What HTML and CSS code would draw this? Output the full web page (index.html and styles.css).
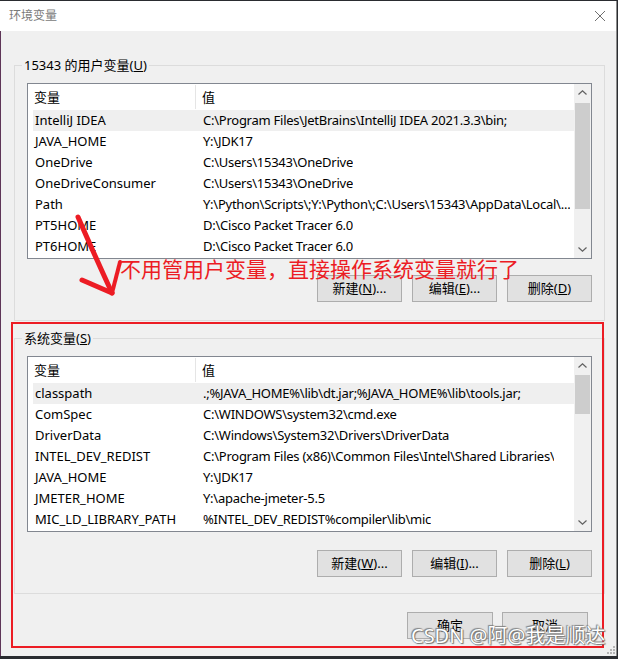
FILE: index.html
```html
<!DOCTYPE html>
<html lang="zh-CN">
<head>
<meta charset="utf-8">
<title>环境变量</title>
<link rel="stylesheet" href="styles.css">
</head>
<body>
<div class="window">
  <div class="titlebar">
    <span class="title">环境变量</span>
    <svg class="close" width="12" height="12" viewBox="0 0 12 12"><path d="M1 1L11 11M11 1L1 11" stroke="#6f6f6f" stroke-width="1" fill="none"/></svg>
  </div>
  <div class="client">
    <div class="group group-user">
      <div class="group-title">15343 的用户变量(<u>U</u>)</div>
      <div class="list">
        <div class="list-main">
          <div class="list-head"><div class="hcell h1">变量</div><div class="hcell h2">值</div></div>
          <div class="row sel"><span class="c1">IntelliJ IDEA</span><span class="c2">C:\Program Files\JetBrains\IntelliJ IDEA 2021.3.3\bin;</span></div>
          <div class="row"><span class="c1">JAVA_HOME</span><span class="c2">Y:\JDK17</span></div>
          <div class="row"><span class="c1">OneDrive</span><span class="c2">C:\Users\15343\OneDrive</span></div>
          <div class="row"><span class="c1">OneDriveConsumer</span><span class="c2">C:\Users\15343\OneDrive</span></div>
          <div class="row"><span class="c1">Path</span><span class="c2">Y:\Python\Scripts\;Y:\Python\;C:\Users\15343\AppData\Local\...</span></div>
          <div class="row"><span class="c1">PT5HOME</span><span class="c2">D:\Cisco Packet Tracer 6.0</span></div>
          <div class="row"><span class="c1">PT6HOME</span><span class="c2">D:\Cisco Packet Tracer 6.0</span></div>
        </div>
        <div class="vscroll">
          <div class="sb-btn"><svg width="9" height="5" viewBox="0 0 9 5"><path d="M0.5 4.5L4.5 0.8L8.5 4.5" stroke="#606060" stroke-width="1.2" fill="none"/></svg></div>
          <div class="sb-track"><div class="sb-thumb thumb-user"></div></div>
          <div class="sb-btn"><svg width="9" height="5" viewBox="0 0 9 5"><path d="M0.5 0.5L4.5 4.2L8.5 0.5" stroke="#606060" stroke-width="1.2" fill="none"/></svg></div>
        </div>
      </div>
      <div class="btn-row btn-row-user">
        <button class="btn">新建(<u>N</u>)...</button>
        <button class="btn">编辑(<u>E</u>)...</button>
        <button class="btn">删除(<u>D</u>)</button>
      </div>
    </div>

    <div class="group group-sys">
      <div class="group-title">系统变量(<u>S</u>)</div>
      <div class="list">
        <div class="list-main">
          <div class="list-head"><div class="hcell h1">变量</div><div class="hcell h2">值</div></div>
          <div class="row sel"><span class="c1">classpath</span><span class="c2">.;%JAVA_HOME%\lib\dt.jar;%JAVA_HOME%\lib\tools.jar;</span></div>
          <div class="row"><span class="c1">ComSpec</span><span class="c2">C:\WINDOWS\system32\cmd.exe</span></div>
          <div class="row"><span class="c1">DriverData</span><span class="c2">C:\Windows\System32\Drivers\DriverData</span></div>
          <div class="row"><span class="c1">INTEL_DEV_REDIST</span><span class="c2">C:\Program Files (x86)\Common Files\Intel\Shared Libraries\</span></div>
          <div class="row"><span class="c1">JAVA_HOME</span><span class="c2">Y:\JDK17</span></div>
          <div class="row"><span class="c1">JMETER_HOME</span><span class="c2">Y:\apache-jmeter-5.5</span></div>
          <div class="row"><span class="c1">MIC_LD_LIBRARY_PATH</span><span class="c2">%INTEL_DEV_REDIST%compiler\lib\mic</span></div>
        </div>
        <div class="vscroll">
          <div class="sb-btn"><svg width="9" height="5" viewBox="0 0 9 5"><path d="M0.5 4.5L4.5 0.8L8.5 4.5" stroke="#606060" stroke-width="1.2" fill="none"/></svg></div>
          <div class="sb-track"><div class="sb-thumb thumb-sys"></div></div>
          <div class="sb-btn"><svg width="9" height="5" viewBox="0 0 9 5"><path d="M0.5 0.5L4.5 4.2L8.5 0.5" stroke="#606060" stroke-width="1.2" fill="none"/></svg></div>
        </div>
      </div>
      <div class="btn-row btn-row-sys">
        <button class="btn">新建(<u>W</u>)...</button>
        <button class="btn">编辑(<u>I</u>)...</button>
        <button class="btn">删除(<u>L</u>)</button>
      </div>
    </div>

    <div class="dlg-buttons">
      <button class="btn btn-dlg">确定</button>
      <button class="btn btn-dlg">取消</button>
    </div>
  </div>
</div>

<div class="annot-box"></div>
<svg class="annot-arrow" width="60" height="100" viewBox="0 0 60 100">
  <path d="M8 12 C 18 35, 30 62, 42 88" stroke="#ec1c24" stroke-width="5" fill="none" stroke-linecap="round"/>
  <path d="M12 75 L42 88" stroke="#ec1c24" stroke-width="5" fill="none" stroke-linecap="round"/>
  <path d="M50 57 L42 88" stroke="#ec1c24" stroke-width="4" fill="none" stroke-linecap="round"/>
</svg>
<div class="annot-text">不用管用户变量，直接操作系统变量就行了</div>
<div class="watermark">CSDN @阿@我是顺达</div>
<svg class="grip" width="10" height="10" viewBox="0 0 10 10">
  <rect x="7" y="1" width="2" height="2" fill="#b5b5b5"/>
  <rect x="4" y="4" width="2" height="2" fill="#b5b5b5"/>
  <rect x="7" y="4" width="2" height="2" fill="#b5b5b5"/>
  <rect x="1" y="7" width="2" height="2" fill="#b5b5b5"/>
  <rect x="4" y="7" width="2" height="2" fill="#b5b5b5"/>
  <rect x="7" y="7" width="2" height="2" fill="#b5b5b5"/>
</svg>
</body>
</html>
```

FILE: styles.css
```css
* { box-sizing: border-box; }

html, body {
  margin: 0;
  padding: 0;
}

body {
  position: relative;
  width: 618px;
  height: 659px;
  background: #2a2c30;
  font-family: "Noto Sans", "Noto Sans CJK SC", sans-serif;
  font-size: 13px;
  color: #000;
  overflow: hidden;
}

.window {
  margin-top: 1px;
  width: 617px;
  height: 655px;
  background: #f0f0f0;
  border-right: 1px solid #8c8c8c;
  display: flex;
  flex-direction: column;
}

.titlebar {
  height: 30px;
  background: #fff;
  display: flex;
  align-items: center;
  justify-content: space-between;
  padding: 0 10px 2px 9px;
}

.title {
  font-family: "Noto Sans CJK SC", sans-serif;
  font-size: 12px;
  line-height: 16px;
  color: #7a7a7a;
}

.close { display: block; margin-top: 1px; }

.client {
  flex: 1;
  padding: 34px 11px 0 13px;
  border-left: 1px solid #5e3557;
}

.group {
  border: 1px solid #dcdcdc;
}

.group-sys { margin-top: 17px; padding-bottom: 16px; }
.group-user { padding-bottom: 18px; }

.group-title {
  width: fit-content;
  margin: -9px 0 0 7px;
  padding: 0 2px;
  background: #f0f0f0;
  line-height: 16px;
  height: 16px;
}

u { text-decoration: underline; text-underline-offset: 1px; }

.list {
  margin: 10px 12px 0 12px;
  height: 176px;
  border: 1px solid #828790;
  background: #fff;
  display: flex;
}

.list-main {
  flex: 1;
  min-width: 0;
  overflow: hidden;
}

.list-head {
  height: 26px;
  display: flex;
  align-items: center;
}

.hcell {
  line-height: 24px;
  height: 24px;
}

.h1 {
  width: 168px;
  padding-left: 6px;
  border-right: 1px solid #e5e5e5;
}

.h2 { padding-left: 6px; }

.row {
  margin-left: 5px;
  height: 21px;
  line-height: 21px;
  display: flex;
  white-space: nowrap;
}

.row.sel { background: #efefef; }

.c1 {
  width: 168px;
  flex: none;
  padding-left: 2px;
  overflow: hidden;
}

.c2 {
  padding-left: 2px;
  overflow: hidden;
  letter-spacing: -0.25px;
}

.vscroll {
  width: 17px;
  flex: none;
  background: #f0f0f0;
  display: flex;
  flex-direction: column;
}

.sb-btn {
  height: 17px;
  flex: none;
  display: flex;
  align-items: center;
  justify-content: center;
}

.sb-btn svg { display: block; }

.sb-track {
  flex: 1;
  display: flex;
  flex-direction: column;
  align-items: center;
}

.sb-thumb {
  width: 15px;
  background: #cdcdcd;
}

.thumb-user { margin-top: 2px; height: 106px; }
.thumb-sys { margin-top: 1px; height: 39px; }

.btn-row {
  display: flex;
  justify-content: flex-end;
  gap: 10px;
  margin-right: 12px;
}

.btn-row-user { margin-top: 16px; }
.btn-row-sys { margin-top: 18px; }

.btn {
  width: 85px;
  height: 27px;
  padding: 0;
  background: #e1e1e1;
  border: 1px solid #adadad;
  font-family: "Noto Sans", "Noto Sans CJK SC", sans-serif;
  font-size: 13px;
  line-height: 25px;
  color: #000;
}

.dlg-buttons {
  display: flex;
  justify-content: flex-end;
  gap: 9px;
  margin: 18px 17px 0 0;
}

.btn-dlg { width: 86px; }

.annot-box {
  position: absolute;
  left: 11px;
  top: 322px;
  width: 593px;
  height: 326px;
  border: 2px solid #ec1c24;
}

.annot-arrow {
  position: absolute;
  left: 70px;
  top: 205px;
}

.annot-text {
  position: absolute;
  left: 120px;
  top: 257px;
  font-family: "Noto Sans CJK SC", sans-serif;
  font-size: 21px;
  line-height: 22px;
  color: #ec1c24;
  white-space: nowrap;
}

.watermark {
  position: absolute;
  left: 411px;
  top: 624px;
  font-family: "Noto Sans", "Noto Sans CJK SC", sans-serif;
  font-size: 20px;
  line-height: 24px;
  color: #fff;
  white-space: nowrap;
  text-shadow: 0 0 1px #555, 1px 1px 1px #777, -1px -1px 1px #888;
}

.grip {
  position: absolute;
  left: 606px;
  top: 645px;
}
```
